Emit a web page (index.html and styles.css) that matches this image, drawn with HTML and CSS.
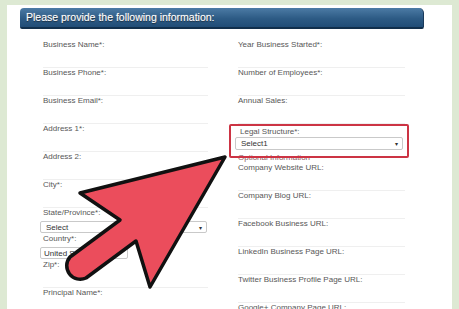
FILE: index.html
```html
<!DOCTYPE html>
<html lang="en">
<head>
    <meta charset="UTF-8">
    <meta name="viewport" content="width=device-width, initial-scale=1.0">
    <title>Business Information</title>
    <link rel="stylesheet" href="styles.css">
</head>
<body>
    <div class="page">
        <div class="header">Please provide the following information:</div>

        <div class="form">
            <div class="column">
                <div class="field"><label>Business Name*:</label></div>
                <div class="field"><label>Business Phone*:</label></div>
                <div class="field"><label>Business Email*:</label></div>
                <div class="field"><label>Address 1*:</label></div>
                <div class="field"><label>Address 2:</label></div>
                <div class="field"><label>City*:</label></div>
                <div class="field compact">
                    <label>State/Province*:</label>
                    <div class="select wide"><span>Select</span><span class="caret">&#9662;</span></div>
                </div>
                <div class="field compact">
                    <label>Country*:</label>
                    <div class="select short"><span>United States Island</span></div>
                </div>
                <div class="field"><label>Zip*:</label></div>
                <div class="field"><label>Principal Name*:</label></div>
            </div>

            <div class="column">
                <div class="field"><label>Year Business Started*:</label></div>
                <div class="field"><label>Number of Employees*:</label></div>
                <div class="field"><label>Annual Sales:</label></div>
                <div class="highlight">
                    <label>Legal Structure*:</label>
                    <div class="select"><span>Select1</span><span class="caret">&#9662;</span></div>
                </div>
                <div class="section">Optional Information</div>
                <div class="field"><label>Company Website URL:</label></div>
                <div class="field"><label>Company Blog URL:</label></div>
                <div class="field"><label>Facebook Business URL:</label></div>
                <div class="field"><label>LinkedIn Business Page URL:</label></div>
                <div class="field"><label>Twitter Business Profile Page URL:</label></div>
                <div class="field"><label>Google+ Company Page URL:</label></div>
            </div>
        </div>
    </div>

    <!-- pointer arrow drawn over the form -->
    <svg class="arrow" width="459" height="309" viewBox="0 0 459 309">
        <path d="M225 157 L80 193 L120 220 L70 257 A13.5 13.5 0 0 0 86 278 L136 241 L150 287 Z"
              fill="#eb4d5c" stroke="#111" stroke-width="3.5" stroke-linejoin="round"/>
    </svg>
</body>
</html>
```

FILE: styles.css
```css
body {
    margin: 0;
    width: 459px;
    height: 309px;
    overflow: hidden;
    background-color: #dde9d3;
    font-family: "Liberation Sans", Arial, sans-serif;
    position: relative;
}
.page {
    margin: 5px 0 0 7px;
    width: 445px;
    height: 304px;
    background-color: #fff;
    overflow: hidden;
}
.header {
    margin: 3px 0 0 13px;
    width: 397px;
    height: 19px;
    padding-left: 6px;
    line-height: 19px;
    font-size: 10.5px;
    color: #fff;
    text-shadow: 0 1px 1px rgba(0, 0, 0, 0.6), 0 0 1px rgba(255, 255, 255, 0.6);
    background: linear-gradient(#4c7ba5, #2d5b85 55%, #214d77);
    border-bottom: 2px solid #112f4c;
    border-right: 1px solid #1a3a5a;
    border-radius: 4px 5px 2px 2px;
}
.form {
    display: grid;
    grid-template-columns: 165px 167px;
    column-gap: 30px;
    margin: 11px 0 0 36px;
}
.field {
    height: 28px;
    box-sizing: border-box;
    border-bottom: 1px solid #efefef;
}
.field.compact {
    height: auto;
    border-bottom: none;
}
label {
    display: block;
    font-size: 8px;
    line-height: 10px;
    color: #575757;
}
.select {
    display: flex;
    justify-content: space-between;
    align-items: center;
    box-sizing: border-box;
    height: 13px;
    padding: 0 4px 0 5px;
    border: 1px solid #c9c9c9;
    border-radius: 2px;
    font-size: 8px;
    color: #333;
    background-color: #fff;
    white-space: nowrap;
    overflow: hidden;
}
.select.wide {
    margin: 3px 0 1px -3px;
    width: 167px;
    height: 12px;
}
.select.short {
    margin: 3px 0 1px -3px;
    width: 88px;
    height: 12px;
    padding-left: 3px;
}
.caret {
    font-size: 6px;
    color: #333;
}
.highlight {
    position: relative;
    z-index: 1;
    margin-left: -9px;
    width: 176px;
    height: 29px;
    padding: 1px 0 0 0;
    border: 2px solid #cc3444;
    border-radius: 2px;
}
.highlight label {
    padding-left: 9px;
}
.highlight .select {
    margin-left: 4px;
    width: 168px;
}
.section {
    margin-top: -5px;
    font-size: 8px;
    line-height: 10px;
    color: #8a5a60;
}
.arrow {
    position: absolute;
    left: 0;
    top: 0;
}
```
